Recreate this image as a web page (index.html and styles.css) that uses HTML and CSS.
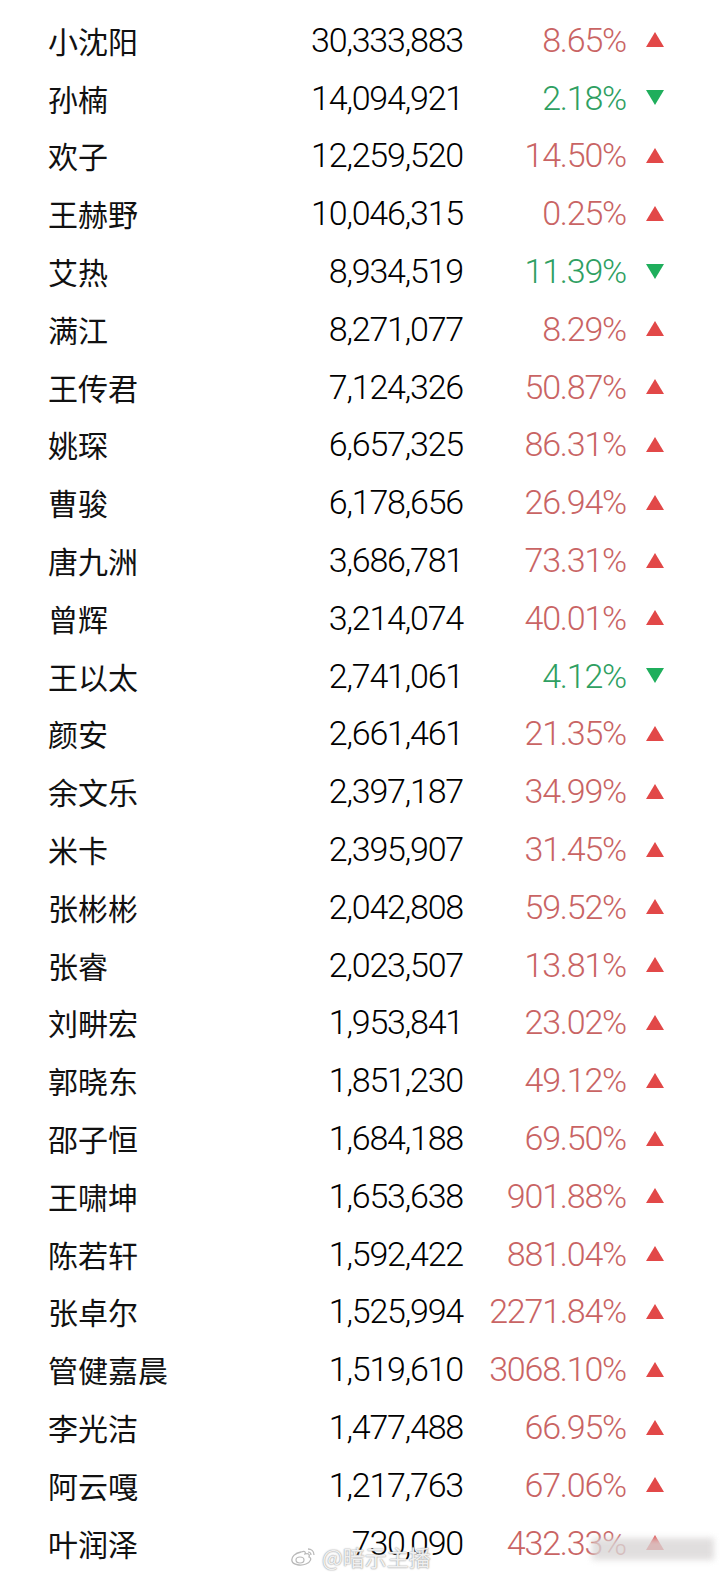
FILE: index.html
```html
<html>
<head>
	<meta charset="utf-8">
	<link rel="stylesheet" href="styles.css">
</head>
<body>
	<div class="list">
		<div class="row"><span class="name">小沈阳</span><span class="num">30,333,883</span><span class="pct up">8.65%</span><span class="tri up"></span></div>
		<div class="row"><span class="name">孙楠</span><span class="num">14,094,921</span><span class="pct down">2.18%</span><span class="tri down"></span></div>
		<div class="row"><span class="name">欢子</span><span class="num">12,259,520</span><span class="pct up">14.50%</span><span class="tri up"></span></div>
		<div class="row"><span class="name">王赫野</span><span class="num">10,046,315</span><span class="pct up">0.25%</span><span class="tri up"></span></div>
		<div class="row"><span class="name">艾热</span><span class="num">8,934,519</span><span class="pct down">11.39%</span><span class="tri down"></span></div>
		<div class="row"><span class="name">满江</span><span class="num">8,271,077</span><span class="pct up">8.29%</span><span class="tri up"></span></div>
		<div class="row"><span class="name">王传君</span><span class="num">7,124,326</span><span class="pct up">50.87%</span><span class="tri up"></span></div>
		<div class="row"><span class="name">姚琛</span><span class="num">6,657,325</span><span class="pct up">86.31%</span><span class="tri up"></span></div>
		<div class="row"><span class="name">曹骏</span><span class="num">6,178,656</span><span class="pct up">26.94%</span><span class="tri up"></span></div>
		<div class="row"><span class="name">唐九洲</span><span class="num">3,686,781</span><span class="pct up">73.31%</span><span class="tri up"></span></div>
		<div class="row"><span class="name">曾辉</span><span class="num">3,214,074</span><span class="pct up">40.01%</span><span class="tri up"></span></div>
		<div class="row"><span class="name">王以太</span><span class="num">2,741,061</span><span class="pct down">4.12%</span><span class="tri down"></span></div>
		<div class="row"><span class="name">颜安</span><span class="num">2,661,461</span><span class="pct up">21.35%</span><span class="tri up"></span></div>
		<div class="row"><span class="name">余文乐</span><span class="num">2,397,187</span><span class="pct up">34.99%</span><span class="tri up"></span></div>
		<div class="row"><span class="name">米卡</span><span class="num">2,395,907</span><span class="pct up">31.45%</span><span class="tri up"></span></div>
		<div class="row"><span class="name">张彬彬</span><span class="num">2,042,808</span><span class="pct up">59.52%</span><span class="tri up"></span></div>
		<div class="row"><span class="name">张睿</span><span class="num">2,023,507</span><span class="pct up">13.81%</span><span class="tri up"></span></div>
		<div class="row"><span class="name">刘畊宏</span><span class="num">1,953,841</span><span class="pct up">23.02%</span><span class="tri up"></span></div>
		<div class="row"><span class="name">郭晓东</span><span class="num">1,851,230</span><span class="pct up">49.12%</span><span class="tri up"></span></div>
		<div class="row"><span class="name">邵子恒</span><span class="num">1,684,188</span><span class="pct up">69.50%</span><span class="tri up"></span></div>
		<div class="row"><span class="name">王啸坤</span><span class="num">1,653,638</span><span class="pct up">901.88%</span><span class="tri up"></span></div>
		<div class="row"><span class="name">陈若轩</span><span class="num">1,592,422</span><span class="pct up">881.04%</span><span class="tri up"></span></div>
		<div class="row"><span class="name">张卓尔</span><span class="num">1,525,994</span><span class="pct up">2271.84%</span><span class="tri up"></span></div>
		<div class="row"><span class="name">管健嘉晨</span><span class="num">1,519,610</span><span class="pct up">3068.10%</span><span class="tri up"></span></div>
		<div class="row"><span class="name">李光洁</span><span class="num">1,477,488</span><span class="pct up">66.95%</span><span class="tri up"></span></div>
		<div class="row"><span class="name">阿云嘎</span><span class="num">1,217,763</span><span class="pct up">67.06%</span><span class="tri up"></span></div>
		<div class="row last"><span class="name">叶润泽</span><span class="num">730,090</span><span class="pct up">432.33%</span><span class="tri up"></span></div>
	</div>

	<!-- weibo watermark over the last row -->
	<div class="mark">
		<svg width="26" height="20" viewBox="0 0 26 20">
			<path d="M11 6 C5 7 1 11 2 15 C3 19 11 20 16 18 C21 16 22 12 19 11 C20 8 18 7 15 8 C16 5 14 5 11 6 Z" fill="none" stroke="#b9b9b9" stroke-width="1.3"/>
			<ellipse cx="10" cy="14" rx="4" ry="3" fill="none" stroke="#b9b9b9" stroke-width="1.2"/>
			<path d="M18 3 C21 3 24 5 24 9" fill="none" stroke="#b9b9b9" stroke-width="1.3"/>
			<path d="M18 6 C20 6 21 7 21 9" fill="none" stroke="#b9b9b9" stroke-width="1.2"/>
		</svg>
		<span class="mark-text">@暗示主播</span>
	</div>
	<div class="smudge"></div>
</body>
</html>
```

FILE: styles.css
```css
html, body {
	margin: 0;
	background: #fff;
}
body {
	width: 720px;
	height: 1572px;
	overflow: hidden;
	position: relative;
}
.list {
	padding: 11px 0 0 48px;
}
.row {
	display: grid;
	grid-template-columns: 160px 255px 163px 18px;
	align-items: center;
	height: 57.8px;
}
.name {
	font-family: "Noto Sans CJK SC", sans-serif;
	font-size: 30px;
	color: #111;
	line-height: 1;
}
.num, .pct {
	font-family: Roboto, "Liberation Sans", sans-serif;
	font-size: 34px;
	font-weight: 300;
	letter-spacing: -1.2px;
	text-align: right;
	line-height: 1;
}
.num {
	color: #000;
}
.pct.up {
	color: #c96464;
}
.pct.down {
	color: #2f9f62;
}
.tri {
	width: 0;
	height: 0;
	margin-left: 20px;
	border-left: 9px solid transparent;
	border-right: 9px solid transparent;
}
.tri.up {
	border-bottom: 15px solid #e24848;
}
.tri.down {
	border-top: 15px solid #1fae5c;
}

.mark {
	position: absolute;
	left: 290px;
	top: 1540px;
	display: flex;
	align-items: center;
	gap: 6px;
}
.mark-text {
	font-family: "Noto Sans CJK SC", sans-serif;
	font-size: 22px;
	color: rgba(255, 255, 255, 0.85);
	text-shadow: 0 0 1px #999, 0 0 2px #aaa;
}
.smudge {
	position: absolute;
	left: 592px;
	top: 1538px;
	width: 122px;
	height: 22px;
	background: #d9d6d6;
	filter: blur(3px);
	opacity: 0.8;
}
```
